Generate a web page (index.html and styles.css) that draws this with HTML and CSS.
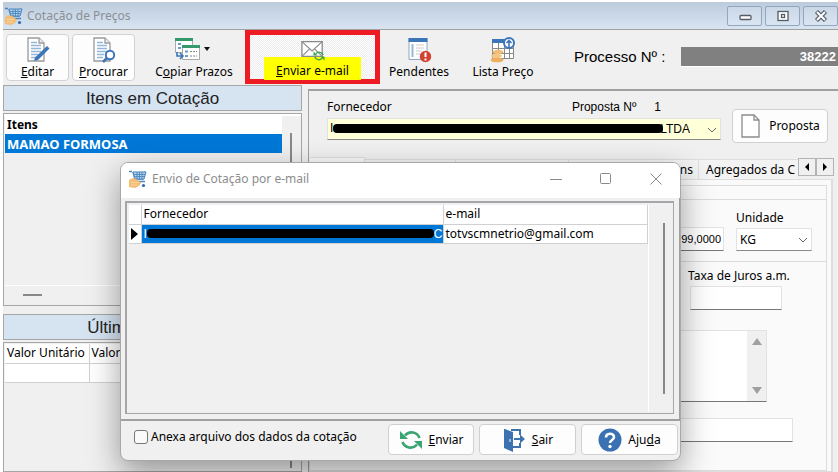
FILE: index.html
```html
<!DOCTYPE html>
<html lang="pt-BR">
<head>
  <meta charset="UTF-8"/>
  <meta name="viewport" content="width=device-width, initial-scale=1.0"/>
  <title>Cotação de Preços</title>
  <link rel="stylesheet" href="styles.css">
</head>
<body>
  <svg class="defs" aria-hidden="true">
    <symbol id="cart" viewBox="0 0 18 18">
      <path d="M0 1.500h3M16 1.500L14 9H6L4 2" fill="#b9d3ea" stroke="#4a86bf" stroke-width="1.500"/>
      <path d="M4 2h13l-2 7H6z" fill="#b9d3ea" stroke="#4a86bf"/>
      <path d="M5 4.500h11M6 6.500h10M8 2v7M10.500 2v7M13 2v7" stroke="#4a86bf" stroke-width=".9"/>
      <path d="M8 11.500h8" stroke="#4a86bf" stroke-width="1.500"/>
      <circle cx="14.500" cy="15.500" r="1.600" fill="#2f6cab"/>
      <path d="M0 10l4-2 5 2 3 3-2 3-4 2-6-1z" fill="#f2bd74"/>
      <path d="M2 12.500h7M2 15h6" stroke="#fbdca9" stroke-width=".8"/>
    </symbol>
    <symbol id="doc" viewBox="0 0 26 26">
      <path d="M3 1h11l5 5v18H3z" fill="#fff" stroke="#9a9a9a" stroke-width="1.300"/>
      <path d="M14 1v5h5" fill="#eee" stroke="#9a9a9a" stroke-width="1.300"/>
      <path d="M6 5.500h6M6 8.500h10M6 11.500h10M6 14.500h10M6 17.500h7M6 20.500h6" stroke="#93b5d8" stroke-width="1.500"/>
    </symbol>
    <symbol id="sync" viewBox="0 0 24 24">
      <path d="M6 7.500A8.500 8.500 0 0 1 20.500 10M18 16.500A8.500 8.500 0 0 1 3.500 14" fill="none" stroke="currentColor" stroke-width="2.600"/>
      <path d="M1 3v8h8zM23 21v-8h-8z" fill="currentColor"/>
    </symbol>
  </svg>

  <div class="app">
    <header class="titlebar">
      <svg class="cart"><use href="#cart"/></svg>
      <h1>Cotação de Preços</h1>
      <div class="win-buttons">
        <button type="button" aria-label="Minimizar"><svg viewBox="0 0 14 12"><rect x="2" y="5.500" width="11" height="4" rx="1" fill="#fff" stroke="#555c68" stroke-width="1.300"/></svg></button>
        <button type="button" aria-label="Restaurar"><svg viewBox="0 0 14 12"><rect x="2" y="1.500" width="10" height="9" fill="#fff" stroke="#555c68" stroke-width="1.300"/><rect x="5.500" y="4.500" width="3" height="3" fill="#fff" stroke="#555c68" stroke-width="1.300"/></svg></button>
        <button type="button" aria-label="Fechar"><svg viewBox="0 0 14 12"><path d="M2.500 1.500l9 9M11.500 1.500l-9 9" stroke="#555c68" stroke-width="4.400"/><path d="M3 2l8 8M11 2l-8 8" stroke="#fff" stroke-width="2"/></svg></button>
      </div>
    </header>

    <div class="toolbar">
      <button type="button" class="tool framed">
        <svg viewBox="0 0 26 26"><use href="#doc"/><path d="M9 24l1-3.500L22 9l2.500 2.500L13 23z" fill="#3c76b8"/></svg>
        <span><u>E</u>ditar</span>
      </button>
      <button type="button" class="tool framed">
        <svg viewBox="0 0 26 26"><use href="#doc"/><circle cx="19" cy="18" r="4.200" fill="#fff" stroke="#3c76b8" stroke-width="2"/><path d="M16 21l-4 4" stroke="#3c76b8" stroke-width="2.600"/></svg>
        <span><u>P</u>rocurar</span>
      </button>
      <button type="button" class="tool wide">
        <svg class="copy" viewBox="0 0 40 26">
          <path d="M1.500 2.500h17v13h-17z" fill="#fff" stroke="#aaa"/><path d="M1 1h18v3H1z" fill="#349a6e"/>
          <path d="M4 7h3M4 11h3" stroke="#6b9bc9" stroke-width="2"/>
          <path d="M8.500 9.500h17v13h-17z" fill="#fff" stroke="#aaa"/><path d="M8 8h18v3H8z" fill="#349a6e"/>
          <path d="M11 14.500h3M11 19h3" stroke="#6b9bc9" stroke-width="2"/><path d="M16 14.500h7M16 19h7" stroke="#888" stroke-dasharray="2 1"/>
          <path d="M3 15v4h5M6 16l3 3-3 3" fill="none" stroke="#3c76b8" stroke-width="1.600"/>
          <path d="M30 10h6l-3 4z" fill="#111"/>
        </svg>
        <span>C<u>o</u>piar Prazos</span>
      </button>
      <button type="button" class="tool send">
        <svg viewBox="0 0 26 26"><path d="M1 4h22v16H1z" fill="#fff" stroke="#8a8a8a" stroke-width="1.400"/><path d="M1 4l11 10L23 4M1 20l8-8M23 20l-8-8" fill="none" stroke="#8a8a8a" stroke-width="1.200"/><use href="#sync" x="13" y="13" width="13" height="13" color="#37a34b"/></svg>
        <span><u>E</u>nviar e-mail</span>
      </button>
      <button type="button" class="tool pend">
        <svg viewBox="0 0 26 26"><path d="M3 1.500h18v21H3z" fill="#fff" stroke="#8da7c4"/><path d="M2.500 1h19v4h-19z" fill="#3c76b8"/><path d="M6.500 7v13" stroke="#9ab7d6" stroke-width="2"/><path d="M10 8h8M10 11h8M10 14h6M10 17h5" stroke="#ccc"/><circle cx="19.500" cy="19.500" r="5.700" fill="#d34131"/><path d="M19.500 15.500v4.500M19.500 21.500v2" stroke="#fff" stroke-width="2"/></svg>
        <span>Pendentes</span>
      </button>
      <button type="button" class="tool price">
        <svg viewBox="0 0 26 26"><path d="M2.500 2.500h21v19h-21z" fill="#fff" stroke="#888"/><path d="M2 2h15v4H2z" fill="#3c76b8"/><path d="M2.500 11.500h21M2.500 16.500h21M8.500 6v15M14.500 6v15M19.500 6v15" stroke="#888"/><circle cx="19" cy="6" r="5" fill="#fff" stroke="#3c76b8" stroke-width="2"/><path d="M19 10V3.500M16.500 6L19 3.500 21.500 6" fill="none" stroke="#3c76b8" stroke-width="1.600"/><ellipse cx="8" cy="15" rx="5.500" ry="2.200" fill="#f2bd74"/><ellipse cx="6.500" cy="19" rx="5.500" ry="2.200" fill="#f5c684"/><ellipse cx="7" cy="23" rx="6.500" ry="2.300" fill="#edb062"/></svg>
        <span>Lista Preço</span>
      </button>
      <label class="process-label" for="processo">Processo Nº :</label>
      <input class="process" id="processo" type="text" value="38222" readonly>
    </div>

    <main class="content">
      <section class="left">
        <h2>Itens em Cotação</h2>
        <div class="grid-box items">
          <div class="items-view">
            <table class="items-table">
              <thead><tr><th>Itens</th></tr></thead>
              <tbody><tr><td>MAMAO FORMOSA</td></tr></tbody>
            </table>
            <div class="hscroll"><i></i></div>
          </div>
          <div class="vscroll"><i></i></div>
        </div>
        <h2>Últimas Compras</h2>
        <div class="grid-box history">
          <table class="history-table">
            <thead><tr><th>Valor Unitário</th><th>Valor Total</th><th></th></tr></thead>
            <tbody><tr><td></td><td></td><td></td></tr></tbody>
          </table>
          <div class="vscroll low"><i></i></div>
        </div>
      </section>

      <section class="right">
        <div class="supplier">
          <div class="supplier-field">
            <div class="supplier-labels">
              <label for="fornecedor">Fornecedor</label>
              <span class="proposal-no"><span>Proposta Nº</span><span>1</span></span>
            </div>
            <div class="combo">
              <select id="fornecedor"><option>LTDA</option></select>
              <span class="masked"><span>I</span><i></i></span>
              <svg class="chev" viewBox="0 0 10 6"><path d="M1 1l4 4 4-4" fill="none" stroke="#666"/></svg>
            </div>
          </div>
          <button type="button" class="btn proposal">
            <svg viewBox="0 0 22 26"><path d="M2 2h12l5 5v17H2z" fill="#fff" stroke="#8c8c8c" stroke-width="1.300"/><path d="M14 2v5h5" fill="none" stroke="#8c8c8c" stroke-width="1.300"/></svg>
            Proposta
          </button>
        </div>

        <div class="tabs">
          <div class="tab active"></div>
          <div class="tab t2"></div>
          <div class="tab t3"></div>
          <div class="tab t4">Itens</div>
          <div class="tab last">Agregados da C</div>
          <button type="button" aria-label="Abas anteriores"><svg viewBox="0 0 6 8"><path d="M5 0v8L1 4z"/></svg></button>
          <button type="button" aria-label="Próximas abas"><svg viewBox="0 0 6 8"><path d="M1 0v8l4-4z"/></svg></button>
        </div>

        <div class="page">
          <div class="page-inner">
            <div class="row first">
              <input class="qty" type="text" value="99,0000" aria-label="Quantidade">
              <div class="field">
                <label for="unidade">Unidade</label>
                <div class="combo unit">
                  <select id="unidade"><option>KG</option></select>
                  <svg class="chev" viewBox="0 0 10 6"><path d="M1 1l4 4 4-4" fill="none" stroke="#666"/></svg>
                </div>
              </div>
            </div>
            <div class="row rate">
              <div class="field">
                <label for="juros">Taxa de Juros a.m.</label>
                <input id="juros" type="text">
              </div>
            </div>
            <div class="memo">
              <textarea aria-label="Observação"></textarea>
              <div class="memo-scroll">
                <svg viewBox="0 0 10 8"><path d="M5 0l5 7H0z" fill="#a0a0a0"/></svg>
                <svg viewBox="0 0 10 8"><path d="M5 8l5-7H0z" fill="#a0a0a0"/></svg>
              </div>
            </div>
            <input class="extra" type="text" aria-label="Complemento">
          </div>
        </div>
      </section>
    </main>
  </div>

  <div class="dialog" role="dialog" aria-labelledby="dlgTitle">
    <div class="dialog-title">
      <svg class="cart"><use href="#cart"/></svg>
      <h2 id="dlgTitle">Envio de Cotação por e-mail</h2>
      <div class="dialog-win">
        <button type="button" aria-label="Minimizar"><svg viewBox="0 0 12 12"><path d="M0 6.500h12"/></svg></button>
        <button type="button" aria-label="Maximizar"><svg viewBox="0 0 12 12"><rect x=".5" y=".5" width="10" height="10" rx="1"/></svg></button>
        <button type="button" aria-label="Fechar"><svg viewBox="0 0 12 12"><path d="M.5.5l11 11M11.500.5l-11 11"/></svg></button>
      </div>
    </div>
    <div class="dialog-body">
      <div class="mail-grid">
        <div class="mail-view">
          <table class="mail-table">
            <thead><tr><th class="mark"></th><th class="name">Fornecedor</th><th>e-mail</th></tr></thead>
            <tbody><tr>
              <td class="mark"><svg viewBox="0 0 7 12"><path d="M0 0v12l7-6z"/></svg></td>
              <td class="name"><div class="hidden-name"><span>I</span><i></i><span>C</span></div></td>
              <td>totvscmnetrio@gmail.com</td>
            </tr></tbody>
          </table>
        </div>
        <div class="mail-scroll"><i></i></div>
      </div>
    </div>
    <div class="dialog-footer">
      <label class="attach"><input type="checkbox"> Anexa arquivo dos dados da cotação</label>
      <button type="button" class="btn b-send"><svg class="green" viewBox="0 0 24 24"><use href="#sync"/></svg><span><u>E</u>nviar</span></button>
      <button type="button" class="btn b-exit"><svg viewBox="0 0 24 24"><path d="M9 2h9v5M18 15v4h-8" fill="none" stroke="#3c72b0" stroke-width="2"/><path d="M2 1h1l8 3v20l-9-4z" fill="#3c72b0"/><path d="M12 10h6V6.500l5 4.500-5 4.500V12h-6z" fill="#3c72b0"/><path d="M8 11v3" stroke="#fff"/></svg><span><u>S</u>air</span></button>
      <button type="button" class="btn b-help"><svg viewBox="0 0 24 24"><circle cx="12" cy="12" r="11.500" fill="#3a71b2"/><path d="M8 9.500C8 4.500 16 4.500 16 9c0 3-4 3-4 6" fill="none" stroke="#fff" stroke-width="2.600"/><circle cx="12" cy="18.500" r="1.700" fill="#fff"/></svg><span>Aju<u>d</u>a</span></button>
    </div>
  </div>
</body>
</html>
```

FILE: styles.css
```css
* { box-sizing:border-box; }
body {
  margin:0; height:100vh; overflow:hidden;
  background:#fff; color:#000;
  font-family:'Noto Sans',sans-serif; font-size:12px; line-height:16px;
}
h1, h2 { margin:0; font-weight:400; }
button, input, select, textarea { font:inherit; color:inherit; margin:0; }
button { padding:0; background:none; border:none; cursor:pointer; }
table { border-collapse:collapse; }
i { display:block; }
.defs { position:absolute; width:0; height:0; }
.cart { width:18px; height:18px; flex:none; }

/* Main window */
.app {
  height:100vh; padding:2px 0 0 3px;
  display:flex; flex-direction:column;
}
.titlebar {
  height:28px; padding-left:2px; flex:none;
  display:flex; align-items:center; gap:4px;
  background:linear-gradient(#bccbdc,#d8e4f1);
  border-bottom:1px solid #a0a0a0;
}
.titlebar h1 { flex:1; font-size:12px; color:#8a8f96; }
.win-buttons { display:flex; gap:3px; }
.win-buttons button {
  width:35px; height:20px;
  display:flex; align-items:center; justify-content:center;
  border:1px solid #93a5bf; border-radius:2px;
  background:linear-gradient(#cad7e6,#dae5f2);
}
.win-buttons svg { width:14px; height:12px; }

/* Toolbar */
.toolbar {
  height:54px; padding-left:3px; flex:none;
  display:flex; align-items:center;
  background:#f0f0f0; position:relative; z-index:1;
}
.tool {
  height:48px; padding-top:4px; flex:none;
  display:flex; flex-direction:column; align-items:center; gap:1px;
  white-space:nowrap;
}
.tool svg { width:26px; height:26px; flex:none; }
.tool .copy { width:40px; }
.tool.framed {
  width:63px; height:47px; padding-top:2px; margin-right:3px;
  background:#fdfdfd; border:1px solid #d2d2d2; border-radius:4px;
}
.tool.wide { width:96px; margin-left:8px; }
.tool.send {
  width:135px; height:54px; margin-left:3px; padding-top:3px; gap:0;
  border:5px solid #ed1c24;
  background:repeating-conic-gradient(#fff 0 25%,#ececec 0 50%) 0 0/2px 2px;
}
.tool.send svg { height:24px; margin-bottom:-5px; position:relative; }
.tool.send span { padding:5px 12px 0; background:#ff0; line-height:18px; }
.tool.pend { width:78px; }
.tool.price { width:90px; }
.process-label {
  margin-left:26px; flex:none;
  font-family:'Liberation Sans',sans-serif; font-size:15px;
}
.process {
  flex:1; min-width:0; height:20px; margin-left:16px; padding:0 2px;
  border:1px solid #fff; border-width:0 0 1px; background:#808080; color:#fff;
  font:bold 13px 'Liberation Sans',sans-serif; text-align:right;
}

/* Left column */
.content { flex:1; min-height:0; display:flex; gap:6px; background:#f0f0f0; }
.left { width:299px; flex:none; display:flex; flex-direction:column; padding-top:1px; }
.left h2 {
  height:26px; margin-bottom:2px; line-height:26px; text-align:center;
  font-family:'Liberation Sans',sans-serif; font-size:17px; color:#222;
  background:#d6e4f2; border:1px solid #a6a6a6;
}
.grid-box {
  display:flex; border:1px solid #a6a6a6; padding:1px;
}
.items { height:193px; margin-bottom:8px; background:linear-gradient(#fff 2px,#f0f0f0 2px); }
.items-view { flex:1; display:flex; flex-direction:column; justify-content:space-between; }
.items-table { width:100%; }
.items-table th, .items-table td { padding:0 2px; height:19px; text-align:left; font-weight:700; background:#fff; }
.items-table td { background:#0078d7; color:#fff; font-size:13px; }
.hscroll { height:19px; padding:8px 18px; border-top:1px solid #fff; }
.hscroll i { width:19px; height:2px; background:#888; }
.vscroll { width:18px; padding:18px 8px 0; }
.vscroll i { width:2px; height:120px; background:#888; }
.vscroll.low { padding-top:80px; }
.vscroll.low i { height:44px; }
.history { flex:1; min-height:0; justify-content:space-between; }
.history-table { flex:1; table-layout:fixed; display:block; height:40px; overflow:hidden; }
.history-table th, .history-table td {
  width:84px; min-width:84px; height:19px; padding:0 2px; text-align:left; font-weight:400;
  background:#fff; border:1px solid #d0d0d0; border-width:0 1px 1px 0; white-space:nowrap;
}

/* Right column */
.right {
  flex:1; min-width:0; margin-top:5px;
  display:flex; flex-direction:column;
  border:1px solid #a0a0a0; border-width:2px 0 0 1px;
}
.supplier { display:flex; gap:11px; padding:8px 10px 0 18px; align-items:flex-end; }
.supplier-field { flex:1; min-width:0; margin-bottom:3px; }
.supplier-labels { display:flex; justify-content:space-between; padding-right:60px; }
.proposal-no { display:flex; gap:18px; font-family:'Liberation Sans',sans-serif; }
.combo { position:relative; }
.combo select {
  appearance:none; display:block; width:100%; height:23px; padding:0 3px;
  border:1px solid #e2e2e2; border-bottom-color:#888; border-radius:0; background:#fff;
}
.supplier .combo { margin-top:3px; }
.supplier .combo select {
  height:22px; padding-right:30px; background:#ffffd8; text-align-last:right;
  font-family:'Liberation Sans',sans-serif;
}
.chev { position:absolute; right:4px; top:9px; width:10px; height:6px; }
.masked {
  position:absolute; left:3px; right:58px; top:2px;
  display:flex; align-items:center; font-family:'Liberation Sans',sans-serif;
}
.masked i { flex:1; height:9px; border-radius:4px; background:#000; }
.btn {
  display:flex; align-items:center; justify-content:center;
  background:#fdfdfd; border:1px solid #d0d0d0; border-radius:4px; white-space:nowrap;
}
.proposal { width:96px; height:34px; gap:7px; flex:none; }
.proposal svg { width:22px; height:26px; }

.tabs { display:flex; align-items:flex-end; height:22px; margin:14px 4px 0 1px; }
.tab {
  height:20px; flex:none; padding-top:2px;
  border:1px solid #dedede; border-width:1px 1px 0 0; background:#f3f3f3; white-space:nowrap;
}
.tab.active { width:55px; height:22px; background:#f9f9f9; }
.tab.t2 { width:91px; }
.tab.t3 { width:113px; }
.tab.t4 { width:130px; padding-right:5px; text-align:right; }
.tab.last { flex:1; min-width:0; padding-left:7px; overflow:hidden; border-right:0; }
.tabs button {
  width:18px; height:18px; margin-bottom:3px;
  display:flex; align-items:center; justify-content:center;
  background:#f0f0f0; border:1px solid #b4b4b4;
}
.tabs svg { width:6px; height:8px; }

.page {
  flex:1; min-height:0; margin-right:5px; padding:5px 4px 0 0;
  background:#fafafa; border:1px solid #dedede; border-right-width:2px;
}
.page-inner { height:100%; border:1px solid #dcdcdc; border-left:0; padding-top:13px; overflow:hidden; }
.row { display:flex; justify-content:flex-end; align-items:flex-end; }
.row.first { height:63px; gap:12px; padding:0 14px 10px; border:1px solid #dcdcdc; border-width:1px 0; }
.page input {
  height:24px; padding:0 2px; border:1px solid #e2e2e2; border-bottom-color:#777;
  background:#fff; outline:none;
}
.page input.qty { width:110px; text-align:right; font-family:'Liberation Sans',sans-serif; font-size:11px; }
.field { display:flex; flex-direction:column; gap:2px; }
.unit { width:76px; }
.row.rate { padding:6px 44px 0; }
.row.rate .field { width:94px; white-space:nowrap; }
.rate input { width:92px; margin-left:2px; }
.memo {
  display:flex; height:72px; margin:20px 59px 16px 17px;
  border:1px solid #e2e2e2; border-bottom-color:#777; background:#fff;
}
.memo textarea { flex:1; min-width:0; border:0; resize:none; overflow:hidden; background:#fff; }
.memo-scroll {
  width:19px; padding:7px 5px; background:#f0f0f0;
  display:flex; flex-direction:column; justify-content:space-between;
}
.memo-scroll svg { width:10px; height:8px; }
.page input.extra { display:block; width:calc(100% - 50px); margin-left:17px; }

/* E-mail dialog */
.dialog {
  position:absolute; left:120px; top:162px; width:561px; z-index:2;
  display:flex; flex-direction:column; overflow:hidden;
  background:#f0f0f0; border:1px solid #a8a8a8; border-radius:8px;
  box-shadow:0 12px 32px rgba(0,0,0,.38);
}
.dialog-title {
  height:35px; padding:0 18px 3px 8px;
  display:flex; align-items:center; gap:5px; background:#fff;
}
.dialog-title h2 { flex:1; font-size:12px; color:#8c8c8c; }
.dialog-win { display:flex; gap:38px; }
.dialog-win button { display:flex; }
.dialog-win svg { width:12px; height:12px; fill:none; stroke:#8a8a8a; }
.dialog-body {
  padding:3px 5px 5px 4px; border:1px solid #a0a0a0; border-width:0 1px 2px 0;
}
.mail-grid {
  height:213px; display:flex; padding:2px 2px 1px;
  border:2px solid #a5a5aa; border-width:2px 1px 1px 2px;
}
.mail-view { flex:1; min-width:0; border-right:1px solid #fff; }
.mail-table { width:100%; table-layout:fixed; }
.mail-table th, .mail-table td {
  height:19px; padding:0 2px; text-align:left; font-weight:400; white-space:nowrap;
  background:#fff; border:1px solid #d0d0d0; border-width:0 1px 1px 0;
}
.mail-table .mark { width:12px; }
.mail-table .name { width:302px; }
.mail-table td.name { padding:0; background:#0078d7; color:#fff; }
.mail-table td svg { display:block; width:7px; height:12px; }
.hidden-name { display:flex; align-items:center; padding-left:2px; font-family:'Liberation Sans',sans-serif; }
.hidden-name i { flex:1; height:9px; border-radius:4px; background:#000; }
.mail-scroll { width:22px; padding:18px 0 0 14px; }
.mail-scroll i { width:2px; height:171px; background:#888; }
.dialog-footer { display:flex; align-items:center; gap:5px; padding:3px 2px 5px 13px; }
.attach { flex:1; display:flex; align-items:center; gap:3px; padding-bottom:6px; white-space:nowrap; }
.attach input {
  appearance:none; width:14px; height:14px;
  background:#fafafa; border:1px solid #777; border-radius:3px;
}
.dialog-footer .btn { height:31px; gap:6px; }
.dialog-footer svg { width:24px; height:24px; }
.green { color:#3aa573; }
.b-send { width:86px; }
.b-exit { width:97px; }
.b-help { width:97px; }
```
